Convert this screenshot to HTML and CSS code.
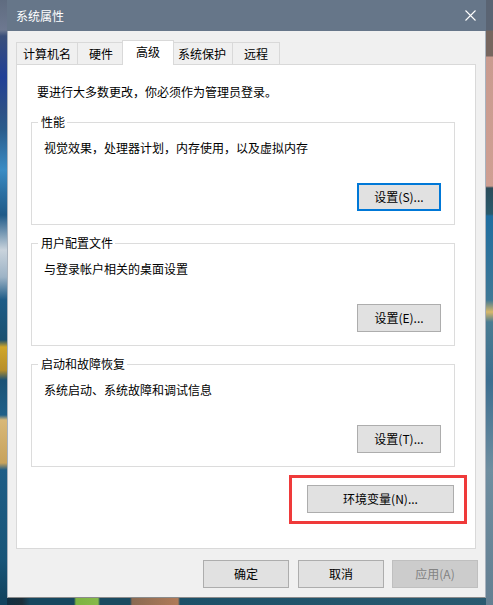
FILE: index.html
```html
<!DOCTYPE html>
<html lang="zh-CN">
<head>
    <meta charset="UTF-8">
    <title>系统属性</title>
    <link rel="stylesheet" href="styles.css">
</head>
<body>
    <div class="dialog">
        <div class="titlebar">
            <span class="title">系统属性</span>
            <svg class="close" width="11" height="11" viewBox="0 0 11 11">
                <path d="M0.5 0.5 L10.5 10.5 M10.5 0.5 L0.5 10.5" stroke="#fff" stroke-width="1.1" fill="none"/>
            </svg>
        </div>

        <div class="content">
            <div class="tabs">
                <div class="tab">计算机名</div>
                <div class="tab">硬件</div>
                <div class="tab active">高级</div>
                <div class="tab">系统保护</div>
                <div class="tab">远程</div>
            </div>

            <div class="panel">
                <p class="intro">要进行大多数更改，你必须作为管理员登录。</p>

                <fieldset class="group">
                    <legend>性能</legend>
                    <p class="group-text">视觉效果，处理器计划，内存使用，以及虚拟内存</p>
                    <div class="group-actions">
                        <button class="btn focused">设置(S)...</button>
                    </div>
                </fieldset>

                <fieldset class="group">
                    <legend>用户配置文件</legend>
                    <p class="group-text">与登录帐户相关的桌面设置</p>
                    <div class="group-actions">
                        <button class="btn">设置(E)...</button>
                    </div>
                </fieldset>

                <fieldset class="group">
                    <legend>启动和故障恢复</legend>
                    <p class="group-text">系统启动、系统故障和调试信息</p>
                    <div class="group-actions">
                        <button class="btn">设置(T)...</button>
                    </div>
                </fieldset>

                <div class="highlight">
                    <button class="btn wide">环境变量(N)...</button>
                </div>
            </div>

            <div class="footer">
                <button class="btn footer-btn">确定</button>
                <button class="btn footer-btn">取消</button>
                <button class="btn footer-btn" disabled>应用(A)</button>
            </div>
        </div>
    </div>
</body>
</html>
```

FILE: styles.css
```css
* {
    box-sizing: border-box;
}

body {
    margin: 0;
    width: 493px;
    height: 605px;
    overflow: hidden;
    font-family: "Noto Sans CJK SC", "Microsoft YaHei", sans-serif;
    font-size: 12px;
    line-height: 16px;
    color: #000;
    /* desktop peeking out around the window: left strip, right strip, taskbar edge */
    background:
        linear-gradient(to bottom,
            #5f6c80 0, #6d7890 30px, #3a4f7a 36px, #203f96 77px, #2c4f86 110px,
            #2a5c8c 130px, #3a8cc4 170px, #2b6fa2 193px, #1f5a88 215px,
            #c9d3dc 250px, #9db3c6 277px, #1d5b86 300px, #1a5070 340px,
            #d0a629 347px, #b88f2a 370px, #1b5275 380px, #1f5f88 415px,
            #d8b878 420px, #c7a25c 463px, #1e5d86 470px, #185578 560px, #12435f 597px)
            0 0 / 7px 605px no-repeat,
        linear-gradient(to bottom,
            #5a6473 0, #5a6473 30px, #76665f 31px, #76665f 56px, #c99b8f 57px,
            #cf9f92 186px, #2b4c5a 188px, #2a5a6c 214px, #1f6ea0 216px,
            #3f7896 300px, #d8b86a 312px, #4a7c92 322px, #3c6e90 380px,
            #6f8ea0 470px, #647f92 605px)
            486px 0 / 7px 605px no-repeat,
        linear-gradient(to right,
            #0d2f45 0, #1b2e3a 22px, #16475f 30px, #16475f 74px, #7cb342 76px,
            #86b94a 98px, #1a4a60 100px, #1a4a60 130px, #8a6a52 132px,
            #b07a58 178px, #1c5068 180px, #2a5a70 493px)
            0 597px / 493px 8px no-repeat,
        #1d5b80;
}

p {
    margin: 0;
}

/* window */
.dialog {
    margin-left: 7px;
    width: 479px;
    height: 598px;
    background: #f0f0f0;
    border: 1px solid #a9b2bd;
    border-top: none;
    border-bottom-color: #8b8b8b;
    display: flex;
    flex-direction: column;
}

.titlebar {
    height: 31px;
    flex: none;
    background: #667689;
    color: #fff;
    display: flex;
    align-items: center;
    justify-content: space-between;
    padding: 0 10px 0 9px;
    margin: 0 -1px;
}

.title {
    line-height: 16px;
}

.close {
    display: block;
}

.content {
    flex: 1;
    display: flex;
    flex-direction: column;
    padding: 11px 9px 0 8px;
}

/* tab strip */
.tabs {
    display: flex;
    align-items: flex-end;
    height: 22px;
}

.tab {
    position: relative;
    height: 22px;
    min-width: 48px;
    padding: 0 6px;
    margin-right: -1px;
    border: 1px solid #d9d9d9;
    border-bottom: none;
    background: #f0f0f0;
    text-align: center;
    line-height: 21px;
}

.tab.active {
    z-index: 1;
    height: 25px;
    min-width: 52px;
    margin: 0 -3px -1px -2px;
    background: #fff;
    line-height: 22px;
}

/* tab page */
.panel {
    height: 485px;
    flex: none;
    background: #fff;
    border: 1px solid #d9d9d9;
    padding: 19px 20px 0 14px;
    display: flex;
    flex-direction: column;
}

.intro {
    margin-left: 6px;
}

.group {
    margin: 14px 0 0;
    padding: 0 13px 13px 12px;
    border: 1px solid #dcdcdc;
    min-width: 0;
}

.group + .group {
    margin-top: 10px;
}

.group legend {
    margin-left: -6px;
    padding: 0 2px 0 3px;
}

.group-text {
    padding-top: 10px;
}

.group-actions {
    display: flex;
    justify-content: flex-end;
    margin-top: 27px;
}

/* push buttons */
.btn {
    width: 84px;
    height: 28px;
    padding: 0;
    font: inherit;
    color: #000;
    background: #e1e1e1;
    border: 1px solid #adadad;
    border-radius: 0;
}

.btn.focused {
    border: 2px solid #0078d7;
}

.btn.wide {
    width: 147px;
}

.btn:disabled {
    background: #cccccc;
    border-color: #bfbfbf;
    color: #838383;
}

/* red marker round the environment variables button */
.highlight {
    align-self: flex-end;
    margin: 8px -12px 0 0;
    padding: 7px 10px 8px 15px;
    border: 3px solid #ef3a3a;
}

.footer {
    display: flex;
    justify-content: flex-end;
    gap: 9px;
    margin: 11px -2px 0 0;
}

.footer-btn {
    width: 86px;
}

.footer-btn:last-child {
    margin-left: -1px;
}
```
